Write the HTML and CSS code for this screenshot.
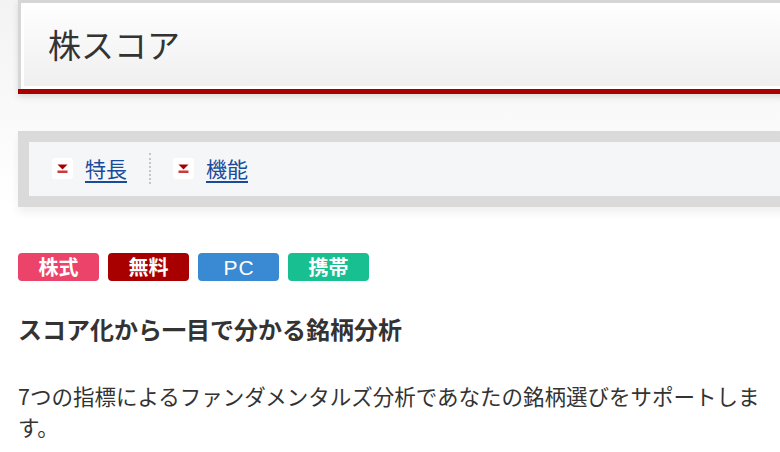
FILE: index.html
```html
<!DOCTYPE html>
<html lang="ja">

<head>
    <meta charset="UTF-8" />
    <title>株スコア</title>
    <link rel="stylesheet" href="styles.css">
</head>

<body>
    <div class="top-area">
        <header class="site-header">
            <div class="site-header-inner">
                <h1 class="title">株スコア</h1>
            </div>
        </header>

        <nav class="page-nav">
            <ul class="page-nav-list">
                <li class="nav-item">
                    <span class="nav-icon">
                        <svg width="21" height="21" viewBox="0 0 21 21">
                            <path d="M5.5 6.5h10l-5 5z" fill="#a50000" />
                            <rect x="5.5" y="12.5" width="10" height="2.5" fill="#c43c3c" />
                        </svg>
                    </span>
                    <a href="#features">特長</a>
                </li>
                <li class="nav-item">
                    <span class="nav-icon">
                        <svg width="21" height="21" viewBox="0 0 21 21">
                            <path d="M5.5 6.5h10l-5 5z" fill="#a50000" />
                            <rect x="5.5" y="12.5" width="10" height="2.5" fill="#c43c3c" />
                        </svg>
                    </span>
                    <a href="#functions">機能</a>
                </li>
            </ul>
        </nav>
    </div>

    <main class="content">
        <div class="tags">
            <span class="tag tag-stock">株式</span>
            <span class="tag tag-free">無料</span>
            <span class="tag tag-pc">PC</span>
            <span class="tag tag-mobile">携帯</span>
        </div>

        <h2 class="lead">スコア化から一目で分かる銘柄分析</h2>

        <p class="desc">7つの指標によるファンダメンタルズ分析であなたの銘柄選びをサポートします。</p>
    </main>
</body>

</html>
```

FILE: styles.css
```css
html,
body {
    margin: 0;
    padding: 0;
}

body {
    background-color: #fff;
    color: #333;
    font-family: "Noto Sans CJK JP", "Noto Sans", sans-serif;
    overflow: hidden;
}

.top-area {
    background: linear-gradient(#f3f3f3, #fafafa 60%, #fff);
    padding: 0 0 0 18px;
}

/* Header */
.site-header {
    margin-right: -30px;
    border-bottom: 5px solid #a80000;
    box-shadow: 0 3px 6px rgba(0, 0, 0, 0.12);
}

.site-header-inner {
    border: 3px solid #d6d6d6;
    border-bottom: 0;
    border-right: 0;
    background-color: #fff;
    padding: 3px 0 3px 3px;
}

.title {
    margin: 0;
    height: 76px;
    padding: 0 0 4px 24px;
    display: flex;
    align-items: center;
    font-size: 33px;
    font-weight: normal;
    color: #333;
    background: linear-gradient(#fefefe, #efefef);
}

/* Page nav */
.page-nav {
    margin-top: 37px;
    margin-right: -30px;
    padding: 11px 0 11px 11px;
    background-color: #dadada;
    box-shadow: 0 6px 8px rgba(0, 0, 0, 0.06);
}

.page-nav-list {
    list-style: none;
    margin: 0;
    padding: 0 0 2px 23px;
    height: 52px;
    display: flex;
    align-items: center;
    background-color: #f5f6f8;
}

.nav-item {
    display: flex;
    align-items: center;
    gap: 12px;
}

.nav-item + .nav-item {
    margin-left: 22px;
    padding-left: 22px;
    border-left: 2px dotted #c3c6cc;
    height: 31px;
}

.nav-icon {
    width: 21px;
    height: 21px;
    background-color: #fff;
    border-radius: 3px;
    display: block;
}

.nav-icon svg {
    display: block;
}

.nav-item a {
    color: #1a4b9b;
    font-size: 21px;
    text-decoration: underline;
    text-underline-offset: 4px;
    text-decoration-thickness: 2px;
}

/* Content */
.content {
    padding: 46px 0 0 18px;
}

.tags {
    display: flex;
    gap: 9px;
}

.tag {
    box-sizing: border-box;
    width: 81px;
    height: 28px;
    border-radius: 4px;
    color: #fff;
    font-size: 20px;
    font-weight: bold;
    display: flex;
    align-items: center;
    justify-content: center;
    line-height: 1;
}

.tag-stock {
    background-color: #eb4369;
}

.tag-free {
    background-color: #a80000;
}

.tag-pc {
    background-color: #3a89d3;
    font-family: "Liberation Sans", sans-serif;
    font-size: 21px;
    font-weight: normal;
    letter-spacing: 1px;
    padding-left: 1px;
}

.tag-mobile {
    background-color: #18bf90;
}

.lead {
    margin: 30px 0 0;
    font-size: 24px;
    line-height: 36px;
    font-weight: bold;
    color: #333;
}

.desc {
    margin: 33px 0 0;
    width: 768px;
    font-size: 21.5px;
    line-height: 31px;
    color: #333;
}
```
